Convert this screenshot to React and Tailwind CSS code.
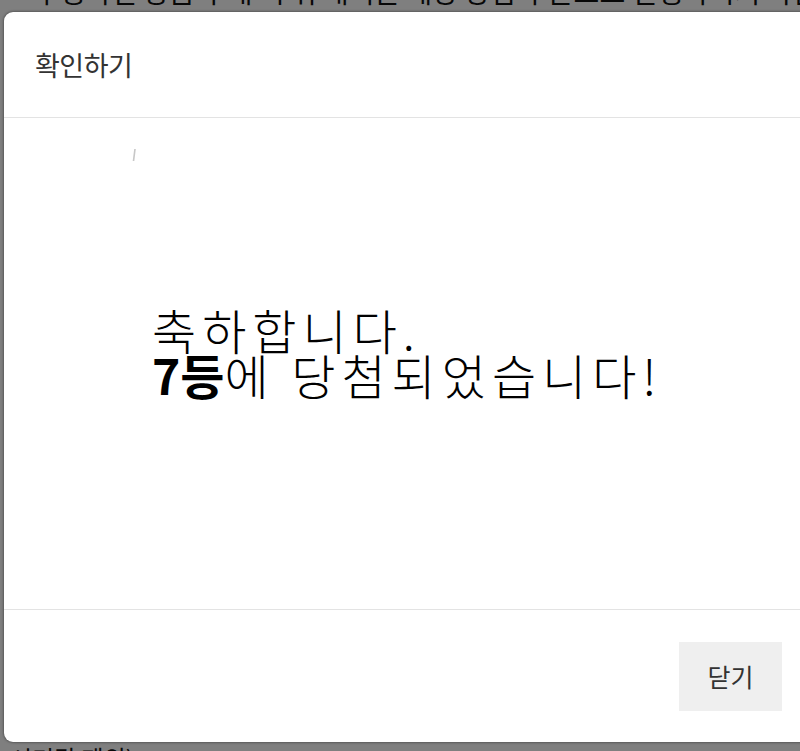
import { useState } from "react";

const font = { fontFamily: '"Noto Sans CJK KR", "Noto Sans", sans-serif' };

export default function App() {
  const [open, setOpen] = useState(true);

  return (
    <div className="relative h-[751px] w-[800px] overflow-hidden bg-white" style={font}>
      {/* 뒤쪽 페이지 */}
      <div className="flex h-full flex-col justify-between text-[#111]">
        <p className="-mt-[28px] whitespace-nowrap pl-[34px] text-[28px] leading-[38px]">
          수령하신 상품 구매 시 위 내역은 해당 당첨 쿠폰으로 진행하시기 바랍니다
        </p>
        <p className="-mb-[24px] whitespace-nowrap pl-[10px] text-[24px] leading-[34px]">
          시기간 제외)
        </p>
      </div>

      {open && (
        <>
          <div className="absolute inset-0 bg-black/50" />
          <div className="absolute left-[4px] top-[12px] flex w-[820px] flex-col rounded-[9px] bg-white shadow-[0_0_3px_rgba(0,0,0,0.6)]">
            <div className="flex h-[106px] items-center border-b border-[#e3e3e3] pl-[31px]">
              <h2 className="text-[27px] leading-none tracking-[-0.5px] text-[#333]">확인하기</h2>
            </div>

            <div className="relative h-[491px] pl-[148px] pt-[189px]">
              <svg className="absolute left-[127px] top-[30px]" width="6" height="16" viewBox="0 0 6 16">
                <path d="M4 1 L2.5 13" stroke="#c8c8c8" strokeWidth="1.6" />
              </svg>
              <p className="text-[48px] font-light leading-[45px] tracking-[6px] text-black">
                축하합니다.
                <br />
                <b className="font-bold tracking-[0px]">7등</b>에 당첨되었습니다!
              </p>
            </div>

            <div className="flex h-[133px] items-start justify-end border-t border-[#e3e3e3] pr-[42px] pt-[32px]">
              <button
                onClick={() => setOpen(false)}
                className="h-[69px] w-[103px] bg-[#efefef] text-[25px] text-[#333]"
              >
                닫기
              </button>
            </div>
          </div>
        </>
      )}
    </div>
  );
}
